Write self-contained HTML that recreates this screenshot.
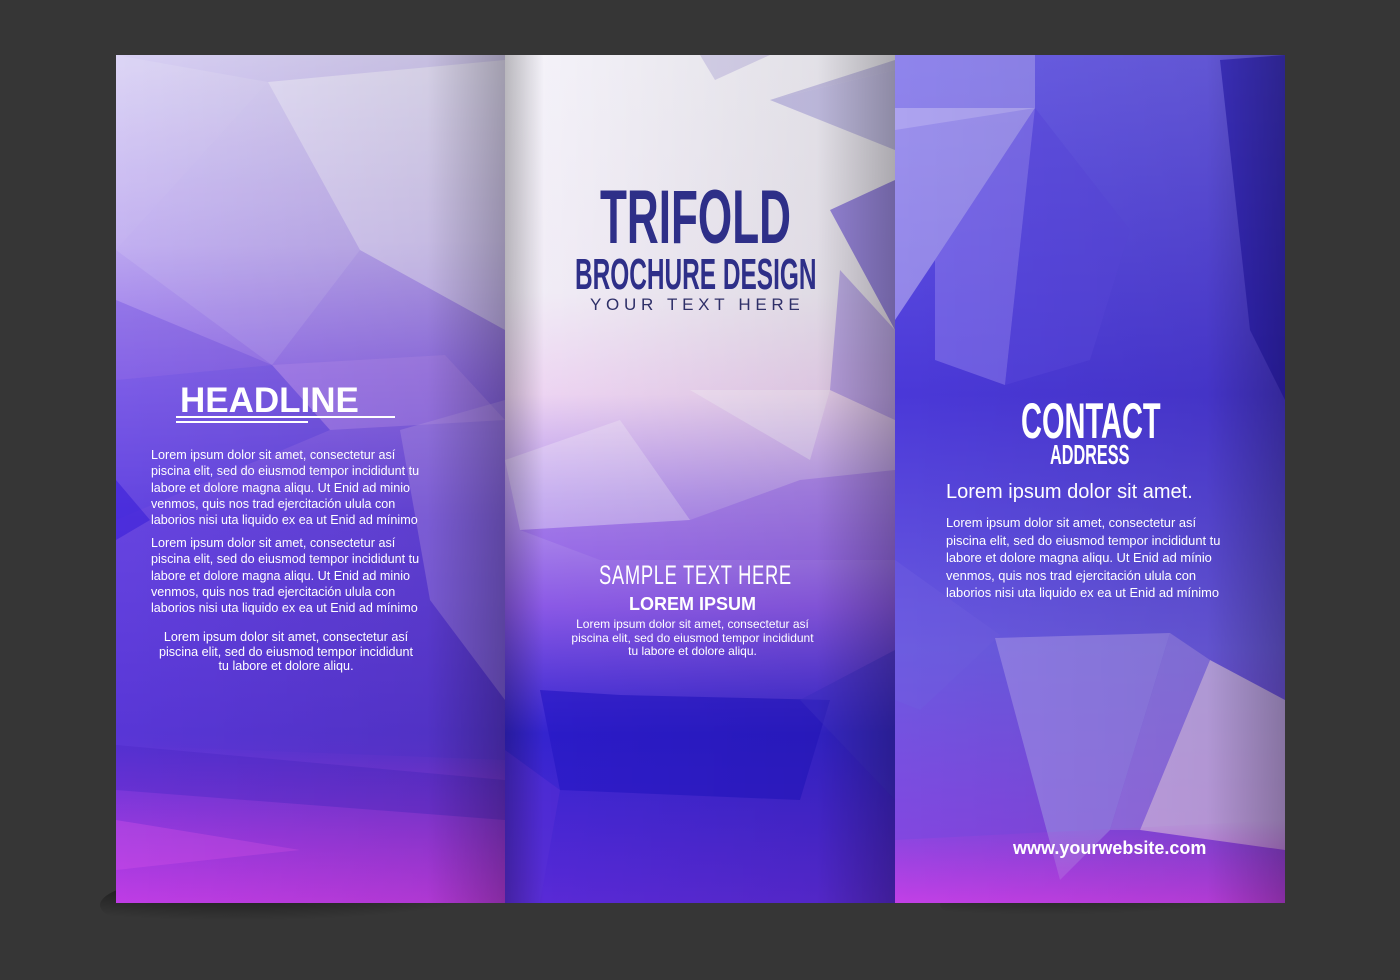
<!DOCTYPE html>
<html><head><meta charset="utf-8"><style>
html,body{margin:0;padding:0;width:1400px;height:980px;background:#363636;overflow:hidden;font-family:"Liberation Sans",sans-serif}
.t{position:absolute;white-space:nowrap}
.body{position:absolute;color:#fff;font-size:12.6px;line-height:16.3px;white-space:nowrap}
</style></head><body>
<svg width="1400" height="980" style="position:absolute;left:0;top:0">
<defs>
<linearGradient id="gl" x1="0" y1="0" x2="0" y2="1">
<stop offset="0" stop-color="#d8d0f4"/><stop offset="0.22" stop-color="#bca8f0"/><stop offset="0.38" stop-color="#9470ea"/><stop offset="0.55" stop-color="#6644e0"/><stop offset="0.8" stop-color="#5836d6"/><stop offset="1" stop-color="#7a30d8"/></linearGradient>
<linearGradient id="gm" x1="0" y1="0" x2="0" y2="1">
<stop offset="0" stop-color="#f6f4fb"/><stop offset="0.28" stop-color="#f3eef8"/><stop offset="0.4" stop-color="#efd6f4"/><stop offset="0.52" stop-color="#b898ee"/><stop offset="0.65" stop-color="#8c5ae8"/><stop offset="0.8" stop-color="#3424d0"/><stop offset="1" stop-color="#5a2ad8"/></linearGradient>
<linearGradient id="gr" x1="0" y1="0" x2="0" y2="1">
<stop offset="0" stop-color="#6a5ee6"/><stop offset="0.4" stop-color="#4a38d8"/><stop offset="0.7" stop-color="#6a5ae0"/><stop offset="1" stop-color="#8a40e0"/></linearGradient>
<linearGradient id="sh" x1="0" y1="0" x2="1" y2="0">
<stop offset="0" stop-color="#000" stop-opacity="0"/><stop offset="0.8" stop-color="#000" stop-opacity="0.08"/><stop offset="1" stop-color="#000" stop-opacity="0.3"/></linearGradient>
<linearGradient id="shl" x1="0" y1="0" x2="1" y2="0">
<stop offset="0" stop-color="#000" stop-opacity="0.25"/><stop offset="0.1" stop-color="#000" stop-opacity="0"/></linearGradient>
<radialGradient id="drop" cx="0.3" cy="0" r="0.7"><stop offset="0" stop-color="#000" stop-opacity="0.9"/><stop offset="1" stop-color="#000" stop-opacity="0"/></radialGradient>
<linearGradient id="mag" x1="0" y1="0" x2="0" y2="1"><stop offset="0" stop-color="#c040e0" stop-opacity="0"/><stop offset="1" stop-color="#d040e8" stop-opacity="0.8"/></linearGradient>
</defs>
<ellipse cx="330" cy="905" rx="230" ry="40" fill="url(#drop)"/>
<ellipse cx="1120" cy="905" rx="180" ry="25" fill="url(#drop)" opacity="0.6"/>
<!-- left panel -->
<rect x="116" y="55" width="389" height="848" fill="url(#gl)"/>
<polygon points="268,82 505,60 505,330 360,250" fill="#fff" opacity="0.4"/>
<polygon points="116,55 268,82 116,250" fill="#fff" opacity="0.12"/>
<polygon points="116,250 268,82 360,250 272,365" fill="#fff" opacity="0.1"/>
<polygon points="116,300 272,365 116,380" fill="#7050e0" opacity="0.4"/>
<polygon points="272,365 445,355 505,420 330,430" fill="#b088f0" opacity="0.5"/>
<polygon points="116,380 272,365 330,430 116,520" fill="#5a40e0" opacity="0.4"/>
<polygon points="116,480 150,520 116,540" fill="#3a20d8" opacity="0.6"/>
<polygon points="400,430 505,400 505,700 430,600" fill="#c0a0f0" opacity="0.35"/>
<polygon points="116,745 505,760 505,903 116,903" fill="url(#mag)"/>
<polygon points="116,745 505,780 505,820 116,790" fill="#4a28c8" opacity="0.4"/>
<polygon points="116,820 300,850 116,870" fill="#d050e8" opacity="0.4"/>
<rect x="116" y="55" width="389" height="848" fill="url(#sh)"/>
<!-- middle panel -->
<rect x="505" y="55" width="390" height="848" fill="url(#gm)"/>
<polygon points="700,55 770,55 715,80" fill="#c8c0e8" opacity="0.6"/>
<polygon points="770,100 895,70 895,60" fill="#b0a8e0" opacity="0.6"/>
<polygon points="770,100 895,70 895,150" fill="#a098dc" opacity="0.5"/>
<polygon points="830,210 895,180 895,330" fill="#7c64e0" opacity="0.7"/>
<polygon points="840,270 895,330 895,420 830,390" fill="#9a7ce8" opacity="0.5"/>
<polygon points="690,390 830,390 810,460" fill="#fff" opacity="0.3"/>
<polygon points="505,460 620,420 690,520 520,530" fill="#fff" opacity="0.25"/>
<polygon points="520,530 690,520 800,480 895,470 895,560 600,560" fill="#9060e8" opacity="0.4"/>
<polygon points="540,690 620,695 830,700 800,800 560,790" fill="#2818c8" opacity="0.7"/>
<polygon points="505,750 560,790 540,903 505,903" fill="#5a30d8" opacity="0.5"/>
<polygon points="800,700 895,650 895,800" fill="#4030d0" opacity="0.5"/>
<rect x="505" y="55" width="390" height="848" fill="url(#shl)"/>
<rect x="505" y="55" width="390" height="848" fill="url(#sh)"/>
<!-- right panel -->
<rect x="895" y="55" width="390" height="848" fill="url(#gr)"/>
<polygon points="895,55 1035,55 1035,108 895,130" fill="#a89ef0" opacity="0.6"/>
<polygon points="895,108 1035,108 935,260 895,320" fill="#c8c0f4" opacity="0.55"/>
<polygon points="935,260 1035,108 1005,385 935,360" fill="#8878ec" opacity="0.6"/>
<polygon points="1035,108 1130,230 1090,360 1005,385" fill="#5a48e0" opacity="0.5"/>
<polygon points="1220,60 1285,55 1285,400 1250,330" fill="#2418b8" opacity="0.6"/>
<polygon points="895,560 1000,635 920,710 895,700" fill="#7060e0" opacity="0.4"/>
<polygon points="995,638 1170,633 1110,830 1060,880" fill="#9c8ae8" opacity="0.7"/>
<polygon points="1210,660 1285,700 1285,850 1140,830" fill="#e0c8e8" opacity="0.7"/>
<polygon points="1170,633 1210,660 1140,830 1110,830" fill="#a890e8" opacity="0.5"/>
<polygon points="895,840 1285,820 1285,903 895,903" fill="url(#mag)"/>
<rect x="895" y="55" width="390" height="848" fill="url(#sh)"/>
</svg>

<div class="t" style="left:600px;top:174px;font-size:76px;font-weight:bold;color:#2e2f88;transform:scaleX(0.58);transform-origin:0 0">TRIFOLD</div>
<div class="t" style="left:575px;top:250px;font-size:44px;font-weight:bold;color:#2e2f88;transform:scaleX(0.555);transform-origin:0 0">BROCHURE DESIGN</div>
<div class="t" style="left:590px;top:295px;font-size:17px;letter-spacing:4.7px;color:#2e2f68">YOUR TEXT HERE</div>

<div class="t" style="left:180px;top:381px;font-size:35px;font-weight:bold;color:#fff">HEADLINE</div>
<div style="position:absolute;left:176px;top:416px;width:219px;height:2px;background:#fff"></div>
<div style="position:absolute;left:176px;top:421px;width:132px;height:2px;background:#fff"></div>

<div class="body" style="left:151px;top:447px">Lorem ipsum dolor sit amet, consectetur así<br>piscina elit, sed do eiusmod tempor incididunt tu<br>labore et dolore magna aliqu. Ut Enid ad minio<br>venmos, quis nos trad ejercitación ulula con<br>laborios nisi uta liquido ex ea ut Enid ad mínimo</div>
<div class="body" style="left:151px;top:535px">Lorem ipsum dolor sit amet, consectetur así<br>piscina elit, sed do eiusmod tempor incididunt tu<br>labore et dolore magna aliqu. Ut Enid ad minio<br>venmos, quis nos trad ejercitación ulula con<br>laborios nisi uta liquido ex ea ut Enid ad mínimo</div>
<div class="body" style="left:116px;width:340px;text-align:center;top:630px;line-height:14.5px">Lorem ipsum dolor sit amet, consectetur así<br>piscina elit, sed do eiusmod tempor incididunt<br>tu labore et dolore aliqu.</div>

<div class="t" style="left:599px;top:560px;font-size:27px;color:#fff;transform:scaleX(0.68);transform-origin:0 0;letter-spacing:1px">SAMPLE TEXT HERE</div>
<div class="t" style="left:505px;width:375px;text-align:center;top:594px;font-size:18px;font-weight:bold;color:#fff">LOREM IPSUM</div>
<div class="body" style="left:505px;width:375px;text-align:center;top:618px;line-height:13.5px;font-size:12px">Lorem ipsum dolor sit amet, consectetur así<br>piscina elit, sed do eiusmod tempor incididunt<br>tu labore et dolore aliqu.</div>

<div class="t" style="left:1021px;top:392px;font-size:50px;font-weight:bold;color:#fff;transform:scaleX(0.58);transform-origin:0 0">CONTACT</div>
<div class="t" style="left:1050px;top:439px;font-size:28px;font-weight:bold;color:#fff;transform:scaleX(0.58);transform-origin:0 0">ADDRESS</div>
<div class="t" style="left:946px;top:481px;font-size:20px;color:#fff">Lorem ipsum dolor sit amet.</div>
<div class="body" style="left:946px;top:514px;line-height:17.5px;font-size:12.9px">Lorem ipsum dolor sit amet, consectetur así<br>piscina elit, sed do eiusmod tempor incididunt tu<br>labore et dolore magna aliqu. Ut Enid ad mínio<br>venmos, quis nos trad ejercitación ulula con<br>laborios nisi uta liquido ex ea ut Enid ad mínimo</div>
<div class="t" style="left:1013px;top:838px;font-size:18px;font-weight:bold;color:#fff">www.yourwebsite.com</div>
</body></html>
